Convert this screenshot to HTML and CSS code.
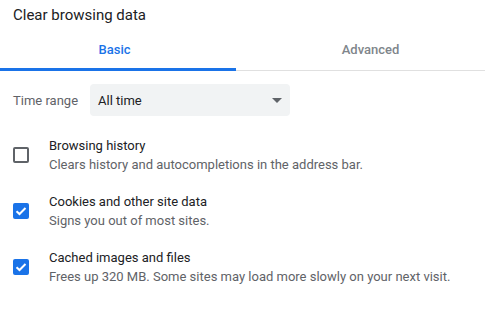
FILE: index.html
```html
<!DOCTYPE html>
<html lang="en">
<head>
  <meta charset="UTF-8">
  <meta name="viewport" content="width=device-width, initial-scale=1.0">
  <title>Clear browsing data</title>
  <link rel="stylesheet" href="styles.css">
</head>
<body>
  <div class="dialog">
    <h1 class="title">Clear browsing data</h1>

    <div class="tabs">
      <div class="tab active">Basic</div>
      <div class="tab">Advanced</div>
    </div>

    <div class="time-range">
      <span class="label">Time range</span>
      <div class="select">
        <span>All time</span>
        <span class="arrow"></span>
      </div>
    </div>

    <div class="option">
      <span class="checkbox"></span>
      <div class="text">
        <div class="name">Browsing history</div>
        <div class="desc">Clears history and autocompletions in the address bar.</div>
      </div>
    </div>

    <div class="option">
      <span class="checkbox checked">
        <svg viewBox="0 0 16 16" width="16" height="16"><path d="M3.5 8.2 L6.5 11 L12.5 5" fill="none" stroke="#fff" stroke-width="2"/></svg>
      </span>
      <div class="text">
        <div class="name">Cookies and other site data</div>
        <div class="desc">Signs you out of most sites.</div>
      </div>
    </div>

    <div class="option">
      <span class="checkbox checked">
        <svg viewBox="0 0 16 16" width="16" height="16"><path d="M3.5 8.2 L6.5 11 L12.5 5" fill="none" stroke="#fff" stroke-width="2"/></svg>
      </span>
      <div class="text">
        <div class="name">Cached images and files</div>
        <div class="desc">Frees up 320 MB. Some sites may load more slowly on your next visit.</div>
      </div>
    </div>
  </div>
</body>
</html>
```

FILE: styles.css
```css
body {
  margin: 0;
  background-color: #ffffff;
  font-family: Roboto, "Liberation Sans", sans-serif;
  font-size: 13px;
  color: #202124;
  overflow: hidden;
}

.dialog {
  width: 505px;
}

.title {
  margin: 0;
  padding: 5px 13px 0;
  font-size: 15px;
  font-weight: 400;
  line-height: 20px;
}

.tabs {
  display: flex;
  align-items: flex-end;
  margin-top: 15px;
}

.tab {
  font-weight: 500;
  line-height: 20px;
  text-align: center;
  color: #80868b;
  flex: 1;
  padding-bottom: 10px;
  border-bottom: 1px solid #e0e0e0;
}

.tab.active {
  flex: 0 0 229px;
  padding-right: 7px;
  padding-bottom: 8px;
  color: #1a73e8;
  border-bottom: 3px solid #1a73e8;
}

.time-range {
  display: flex;
  align-items: center;
  margin-top: 13px;
  padding-left: 13px;
}

.time-range .label {
  width: 77px;
  color: #5f6368;
}

.select {
  width: 200px;
  height: 32px;
  box-sizing: border-box;
  padding: 0 8px;
  display: flex;
  align-items: center;
  justify-content: space-between;
  background-color: #f1f3f4;
  border-radius: 4px;
}

.arrow {
  width: 0;
  height: 0;
  border-left: 5px solid transparent;
  border-right: 5px solid transparent;
  border-top: 5px solid #5f6368;
  margin-top: 1px;
}

.option {
  display: flex;
  align-items: center;
  padding: 9px 0 9px 13px;
}

.option:first-of-type {
  margin-top: 11px;
}

.time-range + .option {
  margin-top: 11px;
}

.checkbox {
  width: 16px;
  height: 16px;
  box-sizing: border-box;
  border: 2px solid #5f6368;
  border-radius: 2px;
  margin-right: 20px;
  flex: none;
}

.checkbox.checked {
  border: none;
  background-color: #1a73e8;
}

.checkbox svg {
  display: block;
}

.name {
  line-height: 20px;
}

.desc {
  line-height: 18px;
  color: #5f6368;
}
```
